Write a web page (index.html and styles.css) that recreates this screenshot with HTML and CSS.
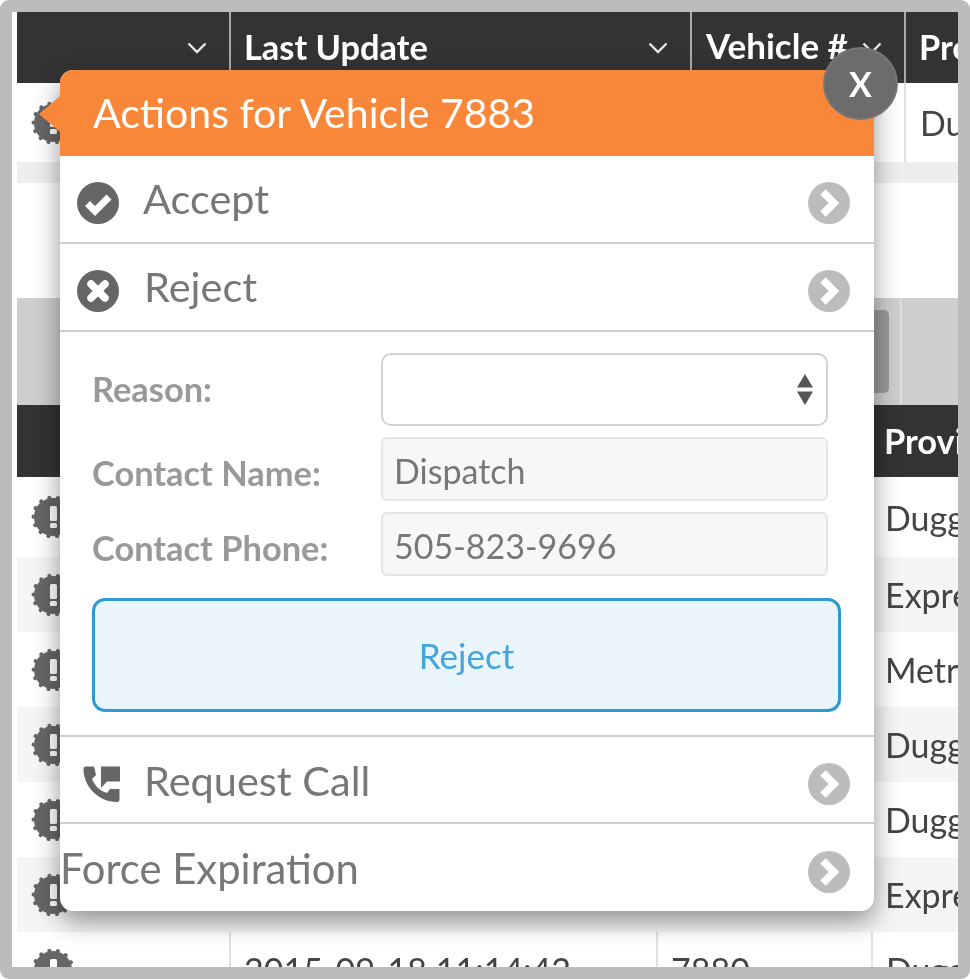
FILE: index.html
```html
<!DOCTYPE html>
<html lang="en">
<head>
<meta charset="utf-8">
<title>Actions for Vehicle 7883</title>
<link rel="stylesheet" href="styles.css">
</head>
<body>
<svg class="defs" width="0" height="0" aria-hidden="true">
  <symbol id="badge" viewBox="0 0 44 44">
    <circle cx="22" cy="22" r="19" fill="#666"/>
    <circle cx="22" cy="22" r="19.5" fill="none" stroke="#666" stroke-width="4" stroke-linecap="round" stroke-dasharray="0.1 8.65"/>
    <rect x="19" y="11" width="7" height="15" rx="1.5" fill="#fff"/>
    <rect x="19" y="28" width="7" height="5" rx="1.5" fill="#fff"/>
  </symbol>
  <symbol id="chev-down" viewBox="0 0 20 12">
    <path d="M1.5 1.5 L10 10 L18.5 1.5" fill="none" stroke="#e8e8e8" stroke-width="2.4"/>
  </symbol>
  <symbol id="go" viewBox="0 0 42 42">
    <circle cx="21" cy="21" r="21" fill="#bbbcbe"/>
    <path d="M15 10 L26 21 L15 32" fill="none" stroke="#fff" stroke-width="7.5"/>
  </symbol>
</svg>

<div class="frame">
  <div class="t1 row-head">
    <div class="hc hc-end"><svg class="chev"><use href="#chev-down"/></svg></div>
    <div class="hc hc-sep"><span>Last Update</span><svg class="chev"><use href="#chev-down"/></svg></div>
    <div class="hc hc-sep"><span class="veh">Vehicle #</span><svg class="chev chev-tight"><use href="#chev-down"/></svg></div>
    <div class="hc hc-sep"><span>Provider</span></div>
  </div>
  <div class="t1 row-body row-first">
    <div class="cell"><svg class="badge"><use href="#badge"/></svg></div>
    <div class="cell"></div>
    <div class="cell"></div>
    <div class="cell cell-sep cell-first">Duggan</div>
  </div>
  <div class="spacer"></div>
  <div class="panel"></div>
  <div class="toolbar">
    <div></div>
    <div class="thumb"></div>
    <div></div>
    <div class="tool-sep"></div>
  </div>
  <div class="t2 row-head row-head2">
    <div class="hc"></div>
    <div class="hc"></div>
    <div class="hc"></div>
    <div class="hc"><span>Provider</span></div>
  </div>
  <div class="t2 row-body row-tall"><div class="cell"><svg class="badge"><use href="#badge"/></svg></div><div class="cell"></div><div class="cell"></div><div class="cell">Duggan</div></div>
  <div class="t2 row-body alt"><div class="cell"><svg class="badge"><use href="#badge"/></svg></div><div class="cell"></div><div class="cell"></div><div class="cell">Express</div></div>
  <div class="t2 row-body"><div class="cell"><svg class="badge"><use href="#badge"/></svg></div><div class="cell"></div><div class="cell"></div><div class="cell">Metro</div></div>
  <div class="t2 row-body alt"><div class="cell"><svg class="badge"><use href="#badge"/></svg></div><div class="cell"></div><div class="cell"></div><div class="cell">Duggan</div></div>
  <div class="t2 row-body"><div class="cell"><svg class="badge"><use href="#badge"/></svg></div><div class="cell"></div><div class="cell"></div><div class="cell">Duggan</div></div>
  <div class="t2 row-body alt"><div class="cell"><svg class="badge"><use href="#badge"/></svg></div><div class="cell"></div><div class="cell"></div><div class="cell">Express</div></div>
  <div class="t2 row-body"><div class="cell"><svg class="badge"><use href="#badge"/></svg></div><div class="cell cell-sep">2015-09-18 11:14:42</div><div class="cell cell-sep">7880</div><div class="cell cell-sep">Duggan</div></div>

  <div class="popover">
    <div class="pointer"></div>
    <div class="pop-title">Actions for Vehicle 7883</div>
    <div class="close">X</div>

    <div class="item">
      <svg class="item-icon" viewBox="0 0 42 42"><circle cx="21" cy="21" r="21" fill="#666"/><path d="M10.5 21.5 L18 29 L32 15" fill="none" stroke="#fff" stroke-width="7"/></svg>
      <span class="item-label item-label-up">Accept</span>
      <svg class="go"><use href="#go"/></svg>
    </div>
    <div class="item">
      <svg class="item-icon" viewBox="0 0 42 42"><circle cx="21" cy="21" r="21" fill="#666"/><path d="M14 14 L28 28 M28 14 L14 28" fill="none" stroke="#fff" stroke-width="7.5" stroke-linecap="round"/></svg>
      <span class="item-label item-label-r item-label-up">Reject</span>
      <svg class="go"><use href="#go"/></svg>
    </div>

    <div class="form">
      <div class="fields">
        <label class="lab lab-reason">Reason:</label>
        <div class="select">
          <svg class="updown" viewBox="0 0 16 31"><path d="M8 0 L16 13.5 H0 Z M0 17.5 H16 L8 31 Z" fill="#555"/></svg>
        </div>
        <label class="lab">Contact Name:</label>
        <input class="input" value="Dispatch" readonly>
        <label class="lab">Contact Phone:</label>
        <input class="input" value="505-823-9696" readonly>
      </div>
      <button class="submit" type="button">Reject</button>
    </div>

    <div class="item item-top">
      <svg class="item-icon item-call" viewBox="0 0 37 36"><path d="M.5 3 C.5 1.5 1.5 .5 3 .5 H11 L13 9 L9 13 C12 20 17 25 24 27 L27 23 H36.5 V33.5 C36.5 35 35.5 36 34 36 C15 36 .5 20 .5 3 Z" fill="#666"/><path d="M18 .5 H37 V15.5 H24 L18 22 Z" fill="#666"/></svg>
      <span class="item-label item-label-r">Request Call</span>
      <svg class="go"><use href="#go"/></svg>
    </div>
    <div class="item item-plain">
      <span class="item-label item-label-plain">Force Expiration</span>
      <svg class="go"><use href="#go"/></svg>
    </div>
  </div>
</div>
</body>
</html>
```

FILE: styles.css
```css
* { box-sizing: border-box; }
html, body { margin: 0; padding: 0; background: #fff; }
body { font-family: "Lato", "Open Sans", sans-serif; width: 970px; height: 979px; overflow: hidden; }
.defs { position: absolute; }

.frame {
  position: relative;
  width: 970px;
  height: 979px;
  border: 12px solid #bbbcbe;
  border-radius: 9px;
  padding-left: 5px;
  background: #fff;
  overflow: hidden;
  filter: blur(0.7px);
}

.t1, .t2 { display: grid; width: 941px; }
.t1 { grid-template-columns: 212px 461px 214px 54px; }
.t2 { grid-template-columns: 212px 427px 215px 87px; }

.row-head { height: 71px; background: #333; color: #fff; font-weight: 700; font-size: 34.4px; }
.row-head2 { height: 72px; }
.hc { display: flex; align-items: center; justify-content: space-between; padding: 0 22px 0 13px; overflow: hidden; white-space: nowrap; }
.hc > span { margin-top: -2px; }
.hc > .veh { margin-left: 1px; margin-top: -5px; font-size: 35px; }
.hc-end { justify-content: flex-end; }
.hc-sep { border-left: 2px solid #a9a9a9; }
.t1 .hc:last-child, .t2 .hc:last-child { padding-right: 0; }
.chev { width: 20px; height: 12px; flex: none; }
.chev-tight { margin-left: -12px; }

.row-body { height: 75px; background: #fff; color: #444; font-size: 34px; }
.row-first { height: 79px; }
.row-tall { height: 80px; }
.alt { background: #f5f5f5; }
.cell { display: flex; align-items: center; padding-left: 14px; overflow: hidden; white-space: nowrap; }
.cell-sep { border-left: 2px solid #e2e2e2; padding-left: 13px; }
.cell-first { padding-left: 14px; }
.badge { width: 44px; height: 44px; flex: none; }

.spacer { height: 21px; width: 941px; background: #eee; }
.panel { height: 115px; width: 941px; background: #fff; border-top-left-radius: 10px; box-shadow: -5px 0 0 #fff; }
.toolbar { display: grid; grid-template-columns: 803px 69px 11px 2px 1fr; height: 107px; width: 941px; background: #cdced0; }
.thumb { height: 83px; margin-top: 12px; background: #9a9b9d; border-radius: 0 5px 5px 0; }
.tool-sep { background: #dedfe0; }

.popover {
  position: absolute;
  top: 58px;
  left: 48px;
  width: 814px;
  background: #fff;
  border-radius: 13px;
  box-shadow: 0 10px 26px rgba(0, 0, 0, .42);
}
.pointer {
  position: absolute;
  left: -21px;
  top: 26px;
  width: 0;
  height: 0;
  border-style: solid;
  border-width: 18px 21px 18px 0;
  border-color: transparent #f9873a transparent transparent;
}
.pop-title {
  height: 86px;
  background: #f9873a;
  color: #fff;
  font-size: 41px;
  line-height: 86px;
  padding-left: 33px;
  border-radius: 13px 13px 0 0;
}
.close {
  position: absolute;
  top: -23px;
  left: 763px;
  width: 75px;
  height: 73px;
  border-radius: 50%;
  background: #6c6c6c;
  border: 2px solid #767676;
  color: #fff;
  font-weight: 700;
  font-size: 34px;
  display: flex;
  align-items: center;
  justify-content: center;
}
.item {
  display: flex;
  align-items: center;
  height: 88px;
  padding: 0 24px 0 17px;
  border-bottom: 2px solid #ccced0;
  color: #777;
  font-size: 41.5px;
}
.item-icon { width: 42px; height: 42px; flex: none; margin-top: 8px; }
.item-call { width: 37px; height: 36px; margin-left: 6px; margin-right: -1px; margin-top: 8px; }
.item-label { margin-left: 24px; flex: 1; white-space: nowrap; }
.item-label-up { margin-top: -2px; }
.item-label-r { margin-left: 25px; }
.item-label-plain { margin-left: 0; font-size: 41.8px; }
.go { width: 42px; height: 42px; flex: none; margin-top: 8px; }
.item-top { border-top: 2px solid #ccced0; height: 89px; }
.item-plain { padding-left: 0; border-bottom: 0; height: 87px; }

.form { padding: 21px 33px 23px 32px; }
.fields { display: grid; grid-template-columns: 289px 447px; row-gap: 11px; align-items: center; }
.lab { color: #999; font-size: 34.4px; font-weight: 700; padding-top: 6px; }
.lab-reason { padding-top: 0; padding-bottom: 2px; }
.select {
  display: flex;
  align-items: center;
  justify-content: flex-end;
  height: 73px;
  padding-right: 13px;
  background: #fff;
  border: 2px solid #d2d3d4;
  border-radius: 10px;
}
.updown { width: 16px; height: 31px; }
.input {
  display: block;
  width: 100%;
  height: 64px;
  padding: 2px 10px 0 11px;
  background: #f7f7f7;
  border: 2px solid #e6e6e6;
  border-radius: 6px;
  color: #777;
  font: 400 34px "Lato", sans-serif;
}
.submit {
  display: block;
  width: 749px;
  height: 114px;
  margin-top: 22px;
  background: #eaf5fb;
  border: 3px solid #2d9ad3;
  border-radius: 13px;
  color: #42a5dc;
  font: 400 35px "Lato", sans-serif;
}
```
